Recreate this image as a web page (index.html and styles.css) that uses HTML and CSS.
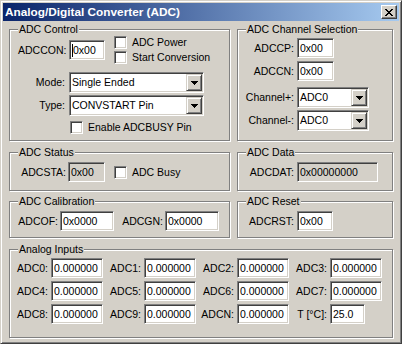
FILE: index.html
```html
<!DOCTYPE html>
<html>
<head>
<meta charset="utf-8">
<title>Analog/Digital Converter (ADC)</title>
<link rel="stylesheet" href="styles.css">
</head>
<body>
<div class="window">
  <div class="titlebar">
    <span class="title">Analog/Digital Converter (ADC)</span>
    <span class="close"><svg width="8" height="7" viewBox="0 0 8 7" shape-rendering="crispEdges"><path fill="#000" d="M0 0h2v1H0zM6 0h2v1H6zM1 1h2v1H1zM5 1h2v1H5zM2 2h4v1H2zM3 3h2v1H3zM2 4h4v1H2zM1 5h2v1H1zM5 5h2v1H5zM0 6h2v1H0zM6 6h2v1H6z"/></svg></span>
  </div>
  <div class="client">
    <div class="row r1">
      <div class="group g-left g-control">
        <span class="legend">ADC Control</span>
        <div class="ctl-top">
          <div class="field f-adccon">
            <span class="lbl lbl-adccon">ADCCON:</span>
            <span class="edit w36"><span class="caret"></span>0x00</span>
          </div>
          <div class="checks">
            <div class="chk"><span class="check"></span><span>ADC Power</span></div>
            <div class="chk"><span class="check"></span><span>Start Conversion</span></div>
          </div>
        </div>
        <div class="field f-mode">
          <span class="lbl lbl-ctl">Mode:</span>
          <span class="combo w135"><span class="combo-text">Single Ended</span><span class="combo-btn"><svg width="7" height="4" viewBox="0 0 7 4" shape-rendering="crispEdges"><path fill="#000" d="M0 0h7v1H0zM1 1h5v1H1zM2 2h3v1H2zM3 3h1v1H3z"/></svg></span></span>
        </div>
        <div class="field f-type">
          <span class="lbl lbl-ctl">Type:</span>
          <span class="combo w135"><span class="combo-text">CONVSTART Pin</span><span class="combo-btn"><svg width="7" height="4" viewBox="0 0 7 4" shape-rendering="crispEdges"><path fill="#000" d="M0 0h7v1H0zM1 1h5v1H1zM2 2h3v1H2zM3 3h1v1H3z"/></svg></span></span>
        </div>
        <div class="chk f-busy"><span class="check"></span><span>Enable ADCBUSY Pin</span></div>
      </div>
      <div class="group g-right g-channel">
        <span class="legend">ADC Channel Selection</span>
        <div class="field f-cp">
          <span class="lbl lbl-r">ADCCP:</span>
          <span class="edit w37">0x00</span>
        </div>
        <div class="field f-cn">
          <span class="lbl lbl-r">ADCCN:</span>
          <span class="edit w37">0x00</span>
        </div>
        <div class="field f-chp">
          <span class="lbl lbl-r">Channel+:</span>
          <span class="combo w72"><span class="combo-text">ADC0</span><span class="combo-btn"><svg width="7" height="4" viewBox="0 0 7 4" shape-rendering="crispEdges"><path fill="#000" d="M0 0h7v1H0zM1 1h5v1H1zM2 2h3v1H2zM3 3h1v1H3z"/></svg></span></span>
        </div>
        <div class="field f-chm">
          <span class="lbl lbl-r">Channel-:</span>
          <span class="combo w72"><span class="combo-text">ADC0</span><span class="combo-btn"><svg width="7" height="4" viewBox="0 0 7 4" shape-rendering="crispEdges"><path fill="#000" d="M0 0h7v1H0zM1 1h5v1H1zM2 2h3v1H2zM3 3h1v1H3z"/></svg></span></span>
        </div>
      </div>
    </div>

    <div class="row r2">
      <div class="group g-left g-small">
        <span class="legend">ADC Status</span>
        <div class="field">
          <span class="lbl lbl-sta">ADCSTA:</span>
          <span class="edit ro w37">0x00</span>
          <div class="chk chk-busy"><span class="check"></span><span>ADC Busy</span></div>
        </div>
      </div>
      <div class="group g-right g-small">
        <span class="legend">ADC Data</span>
        <div class="field">
          <span class="lbl lbl-r">ADCDAT:</span>
          <span class="edit ro w81">0x00000000</span>
        </div>
      </div>
    </div>

    <div class="row r3">
      <div class="group g-left g-small g-cal">
        <span class="legend">ADC Calibration</span>
        <div class="field">
          <span class="lbl lbl-of">ADCOF:</span>
          <span class="edit w54">0x0000</span>
          <span class="lbl lbl-gn">ADCGN:</span>
          <span class="edit w54">0x0000</span>
        </div>
      </div>
      <div class="group g-right g-small g-cal">
        <span class="legend">ADC Reset</span>
        <div class="field">
          <span class="lbl lbl-r">ADCRST:</span>
          <span class="edit w36">0x00</span>
        </div>
      </div>
    </div>

    <div class="row r4">
      <div class="group g-analog">
        <span class="legend">Analog Inputs</span>
        <div class="ain-grid">
          <div class="ain"><span class="ain-lbl">ADC0:</span><span class="ain-slot"><span class="edit">0.000000</span></span></div>
          <div class="ain"><span class="ain-lbl">ADC1:</span><span class="ain-slot"><span class="edit">0.000000</span></span></div>
          <div class="ain"><span class="ain-lbl">ADC2:</span><span class="ain-slot"><span class="edit">0.000000</span></span></div>
          <div class="ain"><span class="ain-lbl">ADC3:</span><span class="ain-slot"><span class="edit">0.000000</span></span></div>
          <div class="ain"><span class="ain-lbl">ADC4:</span><span class="ain-slot"><span class="edit">0.000000</span></span></div>
          <div class="ain"><span class="ain-lbl">ADC5:</span><span class="ain-slot"><span class="edit">0.000000</span></span></div>
          <div class="ain"><span class="ain-lbl">ADC6:</span><span class="ain-slot"><span class="edit">0.000000</span></span></div>
          <div class="ain"><span class="ain-lbl">ADC7:</span><span class="ain-slot"><span class="edit">0.000000</span></span></div>
          <div class="ain"><span class="ain-lbl">ADC8:</span><span class="ain-slot"><span class="edit">0.000000</span></span></div>
          <div class="ain"><span class="ain-lbl">ADC9:</span><span class="ain-slot"><span class="edit">0.000000</span></span></div>
          <div class="ain"><span class="ain-lbl">ADCN:</span><span class="ain-slot"><span class="edit">0.000000</span></span></div>
          <div class="ain"><span class="ain-lbl">T [°C]:</span><span class="ain-slot"><span class="edit w35">25.0</span></span></div>
        </div>
      </div>
    </div>
  </div>
</div>
</body>
</html>
```

FILE: styles.css
```css
* { box-sizing: border-box; }
html, body { margin: 0; padding: 0; }
body {
  width: 402px;
  height: 344px;
  overflow: hidden;
  background: #D4D0C8;
  font-family: "Liberation Sans", Arial, sans-serif;
  font-size: 10.5px;
  line-height: 13px;
  color: #000;
}

/* window frame */
.window {
  width: 402px;
  height: 344px;
  background: #D4D0C8;
  border: 1px solid;
  border-color: #D4D0C8 #404040 #404040 #D4D0C8;
  box-shadow: inset 1px 1px 0 #fff, inset -1px -1px 0 #808080;
  padding: 2px;
  display: flex;
  flex-direction: column;
}
.titlebar {
  height: 18px;
  flex: none;
  background: linear-gradient(to right, #0A246A, #A6CAF0);
  display: flex;
  align-items: center;
  justify-content: space-between;
  padding: 0 2px;
}
.title {
  color: #fff;
  font-weight: bold;
  font-size: 11.8px;
  line-height: 18px;
  white-space: nowrap;
}
.close {
  width: 16px;
  height: 14px;
  background: #D4D0C8;
  border: 1px solid;
  border-color: #fff #404040 #404040 #fff;
  box-shadow: inset -1px -1px 0 #808080;
  display: flex;
  align-items: center;
  justify-content: center;
}
.close svg { display: block; }

/* client area */
.client {
  flex: 1;
  padding: 8px 0 0 6px;
}
.row { display: flex; gap: 7px; }
.r2 { margin-top: 11px; }
.r3 { margin-top: 10px; }
.r4 { margin-top: 11px; }

.group {
  position: relative;
  border: 1px solid #808080;
  box-shadow: inset 1px 1px 0 #fff, 1px 1px 0 #fff;
}
.legend {
  position: absolute;
  top: -7px;
  left: 8px;
  padding: 0 1px;
  background: #D4D0C8;
  line-height: 13px;
  white-space: nowrap;
}
.g-left { width: 221px; }
.g-right { width: 156px; }
.g-control, .g-channel { height: 112px; }
.g-small { height: 39px; padding-top: 9px; }
.g-cal { height: 37px; }
.g-analog { width: 384px; height: 89px; padding-top: 8px; }

/* controls */
.field { display: flex; align-items: center; white-space: nowrap; }
.lbl { flex: none; white-space: nowrap; }
.lbl-r { width: 59px; text-align: right; padding-right: 3px; }

.edit {
  flex: none;
  height: 20px;
  background: #fff;
  border: 1px solid;
  border-color: #808080 #fff #fff #808080;
  box-shadow: inset 1px 1px 0 #404040, inset -1px -1px 0 #D4D0C8;
  padding-left: 2px;
  display: flex;
  align-items: center;
  white-space: nowrap;
  overflow: hidden;
}
.edit.ro { background: #D4D0C8; }
.w35 { width: 35px; }
.w36 { width: 36px; }
.w37 { width: 37px; }
.w54 { width: 54px; }
.w81 { width: 81px; }
.w72 { width: 72px; }
.w135 { width: 135px; }
.caret { width: 1px; height: 13px; background: #000; flex: none; }

.combo {
  flex: none;
  height: 21px;
  background: #fff;
  border: 1px solid;
  border-color: #808080 #fff #fff #808080;
  box-shadow: inset 1px 1px 0 #404040, inset -1px -1px 0 #D4D0C8;
  padding: 1px;
  display: flex;
}
.combo-text {
  flex: 1;
  padding-left: 1px;
  display: flex;
  align-items: center;
  white-space: nowrap;
  overflow: hidden;
}
.combo-btn {
  width: 16px;
  flex: none;
  background: #D4D0C8;
  border: 1px solid;
  border-color: #D4D0C8 #404040 #404040 #D4D0C8;
  box-shadow: inset 1px 1px 0 #fff, inset -1px -1px 0 #808080;
  display: flex;
  align-items: center;
  justify-content: center;
}
.combo-btn svg { display: block; }

.chk { display: flex; align-items: center; height: 13px; gap: 5px; white-space: nowrap; }
.check {
  width: 13px;
  height: 13px;
  flex: none;
  background: #fff;
  border: 1px solid;
  border-color: #808080 #fff #fff #808080;
  box-shadow: inset 1px 1px 0 #404040, inset -1px -1px 0 #D4D0C8;
}

/* ADC Control */
.g-control { padding-top: 6px; }
.ctl-top { display: flex; height: 36px; }
.f-adccon { align-self: flex-start; margin-top: 4px; }
.lbl-adccon { width: 51px; margin-left: 8px; }
.checks { margin-left: 9px; display: flex; flex-direction: column; gap: 2px; }
.lbl-ctl { width: 59px; text-align: right; padding-right: 4px; }
.f-type { margin-top: 2px; }
.f-busy { margin-top: 5px; margin-left: 60px; }

/* Channel selection */
.g-channel { padding-top: 8px; }
.f-cn { margin-top: 3px; }
.f-chp { margin-top: 6px; }
.f-chm { margin-top: 2px; }

/* Status */
.lbl-sta { width: 58px; text-align: right; padding-right: 2px; }
.chk-busy { margin-left: 9px; }

/* Calibration */
.lbl-of { width: 50px; text-align: right; padding-right: 2px; }
.lbl-gn { width: 51px; text-align: right; padding-right: 2px; }

/* Analog inputs */
.ain-grid {
  display: grid;
  grid-template-columns: repeat(4, 93px);
  row-gap: 3px;
}
.ain { display: flex; align-items: center; }
.ain-lbl { flex: 1; text-align: right; padding-right: 3px; white-space: nowrap; }
.ain-slot { width: 52px; flex: none; display: flex; }
.ain-slot .edit { width: 52px; }
.ain-slot .edit.w35 { width: 35px; }
```
